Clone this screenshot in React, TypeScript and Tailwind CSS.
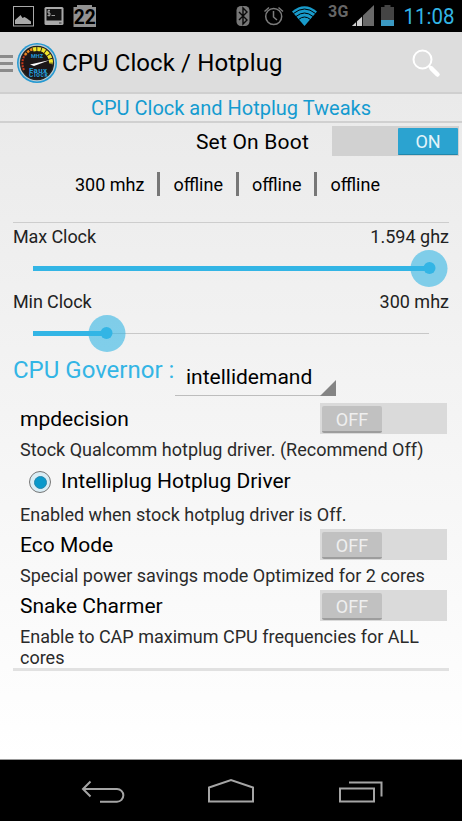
interface TweakProps {
  title: string;
  description: string;
}

interface SliderProps {
  label: string;
  value: string;
  percent: number;
}

const Toggle = ({ on }: { on?: boolean }) => {
  if (on) {
    return (
      <div className="flex h-[30px] w-[127px] justify-end bg-[#d1d1d1] pt-[2px] pr-px pb-px">
        <div className="h-[27px] w-[60px] rounded-[1px] border-b border-[#2187ab] bg-[#2ba3d0] text-center text-[18px] leading-[28px] text-[#e4f4fa]">
          ON
        </div>
      </div>
    );
  }
  return (
    <div className="flex h-[31px] w-[127px] bg-[#dadada] pt-[3px] pl-[2px]">
      <div className="h-[27px] w-[60px] rounded-[2px] border-b-2 border-[#9d9d9d] bg-[#c1c1c1] text-center text-[18px] leading-[27px] text-[#efefef]">
        OFF
      </div>
    </div>
  );
};

const ClockSlider = ({ label, value, percent }: SliderProps) => {
  return (
    <div className="h-[65px]">
      <div className="flex h-[27px] justify-between text-[18px] leading-[28px] text-[#222]">
        <span className="tracking-[-0.1px]">{label}</span>
        <span>{value}</span>
      </div>
      <div className="relative mx-[20px] flex h-[36px] items-center">
        <div className="h-px w-full bg-[#c8c8c8]" />
        <div
          className="absolute left-0 h-[5px] bg-[#33b5e5]"
          style={{ width: `${percent}%` }}
        />
        <div
          className="absolute flex size-[37px] -translate-x-1/2 items-center justify-center rounded-full bg-[#33b5e5]/60"
          style={{ left: `${percent}%` }}
        >
          <div className="size-[12px] rounded-full bg-[#33b5e5]" />
        </div>
      </div>
    </div>
  );
};

const Tweak = ({ title, description }: TweakProps) => {
  return (
    <div className="pl-[7px]">
      <div className="flex h-[31px] justify-between pr-[2px]">
        <span className="text-[21px] leading-[33px]">{title}</span>
        <Toggle />
      </div>
      <p className="pt-[5px] text-[18px] leading-[21px] text-[#2a2a2a]">
        {description}
      </p>
    </div>
  );
};

const Gauge = () => {
  return (
    <svg width="42" height="42" viewBox="0 0 42 42">
      <circle cx="21" cy="21" r="20" fill="#2599d2" />
      <circle cx="21" cy="21" r="17.8" fill="#222" stroke="#b9cbd3" strokeWidth="1.3" />
      <circle cx="21" cy="21" r="15.5" fill="#1c1718" />
      <path d="M8 28A14.5 14.5 0 0 1 9 13" fill="none" stroke="#c83a1c" strokeWidth="2" strokeDasharray="2 1" />
      <path d="M9 13A14.5 14.5 0 0 1 17 7" fill="none" stroke="#ee8a20" strokeWidth="2.5" strokeDasharray="2.5 1" />
      <path d="M17 7.5A14 14 0 0 1 35 22" fill="none" stroke="#f1e52c" strokeWidth="4" strokeDasharray="3.6 .8" />
      <path d="M14 22.5L34 18L18 24Z" fill="#fff" />
      <text x="21" y="16" textAnchor="middle" fontSize="5.5" fontWeight="bold" fill="#2499d5" textLength="12" lengthAdjust="spacingAndGlyphs">
        MHZ
      </text>
      <text x="22" y="30.5" textAnchor="middle" fontSize="8" fontWeight="bold" fill="#2499d5" textLength="18">
        Faux
      </text>
      <text x="22.5" y="35" textAnchor="middle" fontSize="6.5" fontWeight="bold" fill="#2499d5" textLength="19">
        Clock
      </text>
    </svg>
  );
};

const StatusBar = () => {
  return (
    <div className="flex h-[32px] justify-between bg-black">
      <svg width="110" height="32" viewBox="0 0 110 32">
        <rect x="13.5" y="6.5" width="20" height="19.5" fill="none" stroke="#a9a9a9" />
        <path d="M15 24V20L19 16.5L20.5 15L22.5 18L24.5 17L27 18.5L31 21.5V24Z" fill="#a9a9a9" />
        <rect x="44.5" y="7" width="19" height="18" rx="1.5" fill="#a9a9a9" />
        <rect x="46.5" y="9" width="15" height="11.5" fill="#111" />
        <path d="M50 10.5H48V13H50V15.5H47.5M49 9.5V16.5M51.5 15.5H55" fill="none" stroke="#a9a9a9" strokeWidth=".9" />
        <path d="M59 23H61.5" stroke="#333" />
        <path d="M77 5H92V7H96V27H73.500V7H77Z" fill="#929292" />
        <text x="84.700" y="24" textAnchor="middle" fontSize="21" fontWeight="bold" fill="#000" textLength="22" lengthAdjust="spacingAndGlyphs">
          22
        </text>
      </svg>
      <svg width="232" height="32" viewBox="230 0 232 32">
        <rect x="236.500" y="6" width="13" height="20" rx="4.500" fill="#777" />
        <path d="M239 12L247 20L243 24V8L247 12L239 20" fill="none" stroke="#080808" strokeWidth="1.400" />
        <g fill="none" stroke="#7b7b7b" strokeWidth="1.500">
          <circle cx="273.700" cy="16.500" r="8" />
          <path d="M273.500 11V17L277 20M264.500 11.500L269 7.500M278.500 7.500L283 11.500" />
        </g>
        <path d="M292 11.500Q304.500 1 317 11.500L304.500 26Z" fill="#189bcb" />
        <g fill="none" stroke="#000" strokeWidth="1">
          <path d="M293.500 13.500Q304.500 4.500 315.500 13.500" />
          <path d="M296 16.500Q304.500 9.500 313 16.500" />
          <path d="M298.500 19.500Q304.500 14.500 310.500 19.500" />
        </g>
        <text x="328" y="17.300" fontSize="16" fontWeight="bold" fill="#666" textLength="20.500">
          3G
        </text>
        <path d="M374 5V26H352Z" fill="#696969" />
        <path d="M363 16V26H352Z" fill="#cfcfcf" />
        <path d="M356.500 18V26M362.500 14V26" stroke="#000" strokeWidth=".9" />
        <path d="M381 7H384.500V5H390.500V7H394V20H381Z" fill="#444" />
        <rect x="381" y="20" width="13" height="6" fill="#3b99c2" />
        <text x="403.500" y="24" fontSize="22" fill="#33b5e5" textLength="51" lengthAdjust="spacingAndGlyphs">
          11:08
        </text>
      </svg>
    </div>
  );
};

const ActionBar = () => {
  return (
    <div className="flex h-[62px] items-center border-b-2 border-[#cfcfcf] bg-[#ddd] pt-[2px]">
      <div className="flex w-[13px] flex-col gap-[4px]">
        <div className="h-[3px] bg-[#8b8b8b]" />
        <div className="h-[3px] bg-[#8b8b8b]" />
        <div className="h-[3px] bg-[#8b8b8b]" />
      </div>
      <div className="ml-[3px]">
        <Gauge />
      </div>
      <h1 className="ml-[4px] grow text-[24px] leading-[32px] tracking-[0.1px]">
        CPU Clock / Hotplug
      </h1>
      <svg className="mr-[21px]" width="30" height="30" viewBox="0 0 30 30" fill="none" stroke="#fff">
        <circle cx="11.500" cy="11.500" r="9" strokeWidth="2" />
        <path d="M17.500 17.500L21 21" strokeWidth="2.500" />
        <path d="M20.500 20.500L26.500 26.500" strokeWidth="4.500" strokeLinecap="round" />
      </svg>
    </div>
  );
};

const NavBar = () => {
  return (
    <div className="h-[62px] border-t border-[#999] bg-black">
      <svg width="462" height="61" viewBox="0 760 462 61" fill="none" stroke="#a5a5a5" strokeWidth="2">
        <path d="M83 789H117A6.300 6.300 0 0 1 117 801.700H100M90.500 781.500L83 789L90.500 796.500" />
        <path d="M209 801.500V787.500L231 780L253 787.500V801.500Z" />
        <path d="M340 788.500H374V801.500H340ZM349 782.500H381.500V796.500" />
      </svg>
    </div>
  );
};

const cores = ["300 mhz", "offline", "offline", "offline"];

export default function App() {
  return (
    <div className="flex h-[821px] w-[462px] flex-col overflow-hidden bg-white font-[Roboto,sans-serif] text-black">
      <StatusBar />
      <ActionBar />
      <main className="flex grow flex-col bg-linear-to-b from-[#eaeaea] to-white">
        <h2 className="h-[29px] border-b-2 border-[#d0d0d0] text-center text-[20px] leading-[29px] text-[#149bd0]">
          CPU Clock and Hotplug Tweaks
        </h2>
        <div className="flex h-[36px] justify-end gap-[23px] pt-[3px] pr-[3px]">
          <span className="text-[21px] leading-[32px] tracking-[0.2px]">Set On Boot</span>
          <Toggle on />
        </div>
        <div className="flex h-[63px] pt-[13px] pl-[75px] text-[18px] leading-[25px]">
          {cores.map((core, index) => (
            <div key={index} className="flex">
              {index > 0 && (
                <div className="mr-[13px] ml-[13px] h-[24px] w-[3px] bg-[#777]" />
              )}
              <span>{core}</span>
            </div>
          ))}
        </div>
        <div className="mx-[13px] border-t border-[#cdcdcd]">
          <ClockSlider label="Max Clock" value="1.594 ghz" percent={100} />
          <ClockSlider label="Min Clock" value="300 mhz" percent={18.6} />
          <div className="flex h-[50px]">
            <span className="w-[162px] text-[24px] leading-[35px] whitespace-nowrap text-[#33b5e5]">
              CPU Governor :
            </span>
            <div className="relative h-[43px] w-[161px] border-b border-[#bdbdbd] pl-[11px] text-[21px] leading-[49px]">
              intellidemand
              <svg className="absolute right-0 -bottom-px" width="16" height="16">
                <path d="M16 0V16H0Z" fill="#848484" />
              </svg>
            </div>
          </div>
          <Tweak
            title="mpdecision"
            description="Stock Qualcomm hotplug driver. (Recommend Off)"
          />
          <div className="mt-[4px] flex h-[36px] items-center pl-[16px]">
            <div className="flex size-[22px] items-center justify-center rounded-full border border-[#777] bg-[#d9edf5]">
              <div className="size-[13px] rounded-full border border-[#2487ad] bg-[#0999cb]" />
            </div>
            <span className="ml-[10px] text-[21px]">Intelliplug Hotplug Driver</span>
          </div>
          <p className="h-[29px] pl-[7px] text-[18px] leading-[30px] text-[#2a2a2a]">
            Enabled when stock hotplug driver is Off.
          </p>
          <Tweak
            title="Eco Mode"
            description="Special power savings mode Optimized for 2 cores"
          />
          <div className="mt-[4px] border-b-[3px] border-[#e1e1e1]">
            <Tweak
              title="Snake Charmer"
              description="Enable to CAP maximum CPU frequencies for ALL cores"
            />
          </div>
        </div>
      </main>
      <NavBar />
    </div>
  );
}
